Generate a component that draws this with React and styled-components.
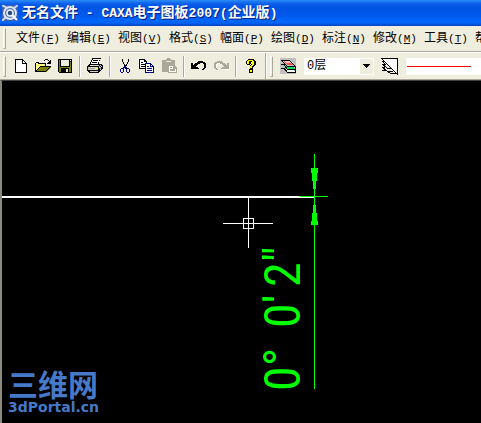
import React from 'react';
import styled, { createGlobalStyle } from 'styled-components';

const Global = createGlobalStyle`
  * { box-sizing: border-box; }
  html, body, #root { height: 100%; margin: 0; }
  body { overflow: hidden; background: #000; }
  button, select { font: inherit; color: inherit; border: 0; padding: 0; margin: 0; background: none; border-radius: 0; }
`;

const Window = styled.div`
  display: flex;
  flex-direction: column;
  height: 100vh;
  overflow: hidden;
  font-family: "Liberation Mono", "Noto Sans CJK SC", monospace;
  font-size: 12px;
  color: #000;
`;

const TitleBar = styled.header`
  flex: none;
  display: flex;
  align-items: center;
  gap: 4px;
  height: 26px;
  padding-left: 2px;
  background: linear-gradient(#2b8cf8 0, #0a5cea 4px, #0054e3 8px, #0058ec 15px, #0167fb 21px, #0164f6 23px, #0140c0 26px);
`;

const Title = styled.h1`
  margin: 0;
  font-size: 14px;
  font-weight: 700;
  line-height: 22px;
  color: #fff;
  text-shadow: 1px 1px 0 #0a1f80;
  white-space: pre;
`;

const Latin = styled.span`
  font-size: ${(p) => p.$size}px;
`;

const MenuBar = styled.nav`
  flex: none;
  display: flex;
  align-items: center;
  height: 26px;
  background: #efeddd;
  border-bottom: 1px solid #aca899;
  overflow: hidden;
`;

const Grip = styled.span`
  flex: none;
  width: 3px;
  height: 21px;
  margin-left: 3px;
  border: 1px solid #aca899;
  border-color: #fff #aca899 #aca899 #fff;
`;

const MenuItem = styled.button`
  flex: none;
  width: 51px;
  height: 22px;
  white-space: nowrap;
  line-height: 22px;
  text-align: left;
`;

const Menus = styled.div`
  display: flex;
  margin-left: 10px;
`;

const ToolRow = styled.div`
  flex: none;
  display: flex;
  align-items: center;
  height: 28px;
  background: #efeddd;
  border-top: 1px solid #fff;
  border-bottom: 1px solid #aca899;
  overflow: hidden;
`;

const Tools = styled.div`
  flex: none;
  display: flex;
  align-items: center;
  margin-left: 4px;
`;

const ToolButton = styled.button`
  flex: none;
  display: grid;
  place-items: center;
  width: 22px;
  height: 22px;
`;

const Divider = styled.span`
  flex: none;
  width: 2px;
  height: 21px;
  margin: 0 3px;
  background: linear-gradient(90deg, #aca899 1px, #fff 1px);
`;

const BandEdge = styled.span`
  flex: none;
  width: 2px;
  height: 100%;
  margin-left: 3px;
  background: linear-gradient(90deg, #aca899 1px, #fff 1px);
`;

const Combo = styled.label`
  flex: none;
  display: flex;
  align-items: center;
  width: 70px;
  height: 17px;
  margin: 0 5px;
  padding: 1px;
  background: #fff;
`;

const ComboSelect = styled.select`
  flex: 1;
  min-width: 0;
  height: 15px;
  padding-left: 2px;
  line-height: 15px;
  appearance: none;
  outline: 0;
`;

const ComboArrow = styled.span`
  flex: none;
  display: grid;
  place-items: center;
  width: 13px;
  height: 15px;
  background: #efeddd;
`;

const LineStyle = styled.button`
  flex: 1;
  height: 17px;
  margin-left: 5px;
  min-width: 64px;
  background: #fff;
  overflow: hidden;
`;

const LineSample = styled.span`
  display: block;
  width: 64px;
  height: 1px;
  margin-left: 1px;
  background: #f00;
`;

const Canvas = styled.main`
  flex: 1;
  min-height: 0;
  position: relative;
  overflow: hidden;
  background: #000;
  border-left: 2px solid #8b887c;
  border-top: 1px solid #404040;
`;

const Drawing = styled.svg`
  position: absolute;
  left: -2px;
  top: -1px;
`;

const Dimension = styled.div`
  position: absolute;
  left: 253px;
  top: 165px;
  display: flex;
  gap: 8px;
  writing-mode: vertical-rl;
  transform: rotate(180deg);
  font-family: "Liberation Sans Narrow", "Roboto Condensed", "Open Sans Condensed", "Liberation Sans", sans-serif;
  font-size: 50px;
  line-height: 56px;
  color: #0f0;
  white-space: pre;
`;

const Watermark = styled.div`
  position: absolute;
  left: 6px;
  bottom: 8px;
  color: #4679c8;
  font-weight: 700;
`;

const SiteName = styled.div`
  font-family: "Noto Sans CJK SC", sans-serif;
  font-size: 30px;
  line-height: 32px;
`;

const SiteUrl = styled.div`
  font-family: "DejaVu Sans", sans-serif;
  font-size: 14px;
  line-height: 16px;
`;

const Svg = ({ w = 16, h = 16, children }) => (
  <svg width={w} height={h} viewBox={`0 0 ${w} ${h}`} shapeRendering="crispEdges" fill="none" aria-hidden="true">
    {children}
  </svg>
);

const AppIcon = () => (
  <svg width="16" height="16" viewBox="0 0 16 16" fill="none" aria-hidden="true">
    <rect width="16" height="16" fill="#3a62b0" />
    <path d="M0 0l5 3M16 0l-4 3M0 16l4-4" stroke="#c8d8f0" strokeWidth="2" />
    <circle cx="8" cy="8" r="6" fill="#5678b4" stroke="#dce6f4" strokeWidth="2" />
    <circle cx="8" cy="8" r="3" fill="#2c4a8c" stroke="#f0f4ff" strokeWidth="1.5" />
    <path d="M10 10l5 5" stroke="#fff" strokeWidth="2" />
  </svg>
);

const NewIcon = () => (
  <Svg>
    <path d="M2 1h8v1h1v1h1v1h1v1h1v10H2z" fill="#000" />
    <path d="M3 2h6v4h4v8H3zM10 3h1v1h1v1h-2z" fill="#fff" />
  </Svg>
);

const OpenIcon = () => (
  <Svg>
    <path d="M1 5h3v1h7v3H5l-4 5z" fill="#ffff80" />
    <path d="M1 14l4-5h11l-4 5z" fill="#808000" />
    <path d="M1 4h3v1h7v3h-1V6H3V5H1v9H0V5h1zM5 8h11v1h-1v1h-1v1h-1v1h-1v1h-1v1H1v-1h10v-1h1v-1h1v-1h1V9H5v1H4v1H3v1H2v1H1v-1h1v-1h1v-1h1V9h1zM9 2h1V1h3v1h-3v1H9zM13 2h1v1h1V2h1v4h-4V5h1V4h1V3h-1z" fill="#000" />
  </Svg>
);

const SaveIcon = () => (
  <Svg>
    <path d="M1 1h14v14H2l-1-1z" fill="#000" />
    <path d="M2 2h1v7h10V4h1v10h-2v-4H4v4H2z" fill="#808000" />
    <path d="M4 2h8v6H4zM13 2h1v1h-1zM9 11h2v3H9z" fill="#efeddd" />
  </Svg>
);

const PrintIcon = () => (
  <Svg>
    <path d="M5 0h9v1h-1v2h-1v3h3v1h1v4h-1v1h-1v1h-1v1h-1v1H2v-1H1v-1H0V8h1V7h1V6h1V4h1V2h1z" fill="#000" />
    <path d="M6 1h7l-1 2-1 3H4l1-3z" fill="#fff" />
    <path d="M6 2h5v1H6zM5 4h5v1H5z" fill="#000" />
    <path d="M3 7h9v1H2zM1 9h10v1H1zM1 11h10v1H1zM3 13h8v1H3zM13 7h1v1h-1zM12 9h1v1h-1zM14 8h1v1h-1zM13 11h1v1h-1z" fill="#d8d6c8" />
    <path d="M1 10h7v1H1zM12 8h1v1h-1zM13 9h1v2h-1z" fill="#aca899" />
    <path d="M8 10h3v1H8z" fill="#ff0" />
  </Svg>
);

const CutIcon = () => (
  <Svg>
    <path d="M5 1h1v3h1v2h1v1h1V6h1V4h1V1h1v3h-1v2h-1v2H9v1H8V8H7V6H6V4H5z" fill="#000" />
    <path d="M7 8h2v1h1v1h2v1h1v3h-1v1h-2v-1H9v-3H8v-1H7v4H6v1H4v-1H3v-3h1v-1h2V9h1zM4 11v3h2v-3zM10 11v3h2v-3z" fill="#000080" fillRule="evenodd" />
  </Svg>
);

const CopyIcon = () => (
  <Svg>
    <path d="M0 1h6v1h1v1h1v8H0z" fill="#000" />
    <path d="M1 2h4v2h2v6H1z" fill="#fff" />
    <path d="M2 4h2v1H2zM2 6h4v1H2zM2 8h4v1H2z" fill="#000" />
    <path d="M6 5h6v1h1v1h1v1h1v7H6z" fill="#000080" />
    <path d="M7 6h4v3h3v5H7zM12 7h1v1h-1z" fill="#fff" />
    <path d="M8 8h2v1H8zM8 10h5v1H8zM8 12h5v1H8z" fill="#000080" />
  </Svg>
);

const PasteIcon = () => (
  <Svg>
    <path d="M1 2h4V1h1V0h3v1h1v1h4v5H8v7H1z" fill="#aca899" />
    <path d="M5 3h5v1H5z" fill="#efeddd" />
    <path d="M7 7h6l3 3v5H7z" fill="#aca899" />
    <path d="M8 8h4v3h3v3H8z" fill="#fff" />
    <path d="M9 9h2v1H9zM9 11h5v1H9zM9 13h5v-1H9z" fill="#aca899" />
  </Svg>
);

const undoPath = 'M0 5h2v2h1V6h1V5h2V4h1V3h5v1h2v1h1v5h-1v1h-1v1h-2v-1h1v-1h1V6h-1V5H9v1H7v1H6v1H5v1h2v1h1v1H0z';

const UndoIcon = () => (
  <Svg><path d={undoPath} fill="#000" /></Svg>
);

const RedoIcon = () => (
  <Svg>
    <g transform="translate(17 1) scale(-1 1)"><path d={undoPath} fill="#fff" /></g>
    <g transform="translate(16 0) scale(-1 1)"><path d={undoPath} fill="#aca899" /></g>
  </Svg>
);

const HelpIcon = () => (
  <Svg>
    <path d="M5 1h6v1h1v1h1v4h-1v1h-1v1h-1v6H6v-4h1V7h1V6h1V4H8v2H7v1H4V6H3V3h1V2h1z" fill="#000" />
    <path d="M5 2h5v1h1v4h-1v1H9v2H7V8h1V7h1V3H6v3H4V3h1zM7 12h2v2H7z" fill="#ff0" />
  </Svg>
);

const LayersIcon = () => (
  <Svg>
    <rect width="16" height="16" fill="#c0c0c0" />
    <path d="M4 11h9l2 3H6z" fill="#fff" />
    <path d="M5 8h8l2 3H7z" fill="#00e060" />
    <path d="M3 2h6l5 5H7z" fill="#ff5050" />
    <path d="M4 2h4l3 3H6z" fill="#ffc8c8" />
    <path d="M1 2h8M1 2l6 6h8M9 2l6 6M1 6h3l3 5h8v-3M1 10h3l3 4h8v-3" stroke="#000" />
  </Svg>
);

const LineTypeIcon = () => (
  <Svg w={18} h={17}>
    <path d="M1 1h16v15z" fill="#fff" />
    <path d="M0 0h17v17h-1V1H0z" fill="#000" />
    <path d="M1 1l15 15M1 3h2M1 6h4M1 3l3 3M1 6l5 4h4M1 9h3M1 9l5 4h6M1 12h4l4 3h7" stroke="#000" />
  </Svg>
);

const menus = [
  ['文件', 'F'], ['编辑', 'E'], ['视图', 'V'], ['格式', 'S'], ['幅面', 'P'],
  ['绘图', 'D'], ['标注', 'N'], ['修改', 'M'], ['工具', 'T'], ['帮助', 'H'],
];

const toolGroups = [
  [['新建', NewIcon], ['打开', OpenIcon], ['保存', SaveIcon]],
  [['打印', PrintIcon]],
  [['剪切', CutIcon], ['复制', CopyIcon], ['粘贴', PasteIcon]],
  [['撤销', UndoIcon], ['重做', RedoIcon]],
  [['帮助', HelpIcon]],
];

export default function App() {
  return (
    <Window>
      <Global />
      <TitleBar>
        <AppIcon />
        <Title>
          无名文件<Latin $size={13}> - CAXA</Latin>电子图板<Latin $size={13}>2007(</Latin>企业版<Latin $size={13}>)</Latin>
        </Title>
      </TitleBar>
      <MenuBar>
        <Grip />
        <Menus>
          {menus.map(([name, key]) => (
            <MenuItem key={key}>{name}<Latin $size={11}>(<u>{key}</u>)</Latin></MenuItem>
          ))}
        </Menus>
      </MenuBar>
      <ToolRow>
        <Grip />
        <Tools>
          {toolGroups.map((group, i) => (
            <React.Fragment key={i}>
              {i > 0 && <Divider />}
              {group.map(([name, Icon]) => (
                <ToolButton key={name} aria-label={name}><Icon /></ToolButton>
              ))}
            </React.Fragment>
          ))}
        </Tools>
        <BandEdge />
        <Grip />
        <Tools>
          <ToolButton aria-label="层控制"><LayersIcon /></ToolButton>
        </Tools>
        <Combo>
          <ComboSelect aria-label="当前层" defaultValue="0"><option value="0">0层</option></ComboSelect>
          <ComboArrow><Svg w={7} h={4}><path d="M0 0h7v1H6v1H5v1H4v1H3V3H2V2H1V1H0z" fill="#000" /></Svg></ComboArrow>
        </Combo>
        <ToolButton aria-label="线型"><LineTypeIcon /></ToolButton>
        <LineStyle aria-label="当前线型"><LineSample /></LineStyle>
      </ToolRow>
      <Canvas>
        <Drawing width="340" height="320" viewBox="0 80 340 320" shapeRendering="crispEdges" aria-hidden="true">
          <path d="M2 196h312v2H2z" fill="#fff" />
          <path d="M248 198h1v50h-1zM223 223h50v1h-50zM243 218h11v1h-11zM243 228h11v1h-11zM243 218h1v11h-1zM253 218h1v11h-1z" fill="#fff" />
          <path d="M314 154h1v235h-1zM300 196h28v1h-28zM311 168h7v5h-1v8h-1v8h-3v-8h-1v-8h-1zM313 205h3v8h1v8h1v4h-7v-4h1v-8h1z" fill="#0f0" />
        </Drawing>
        <Dimension>
          <span>{'0° '}</span>
          <span>0′</span>
          <span>2″</span>
        </Dimension>
        <Watermark>
          <SiteName>三维网</SiteName>
          <SiteUrl>3dPortal.cn</SiteUrl>
        </Watermark>
      </Canvas>
    </Window>
  );
}
